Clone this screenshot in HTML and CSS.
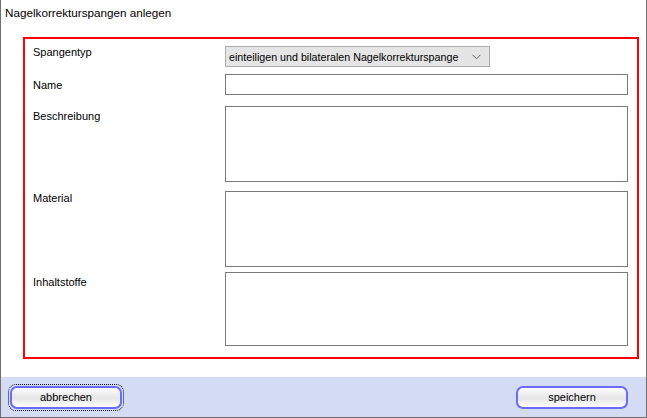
FILE: index.html
```
<!DOCTYPE html>
<html>
<head>
<meta charset="utf-8">
<link rel="stylesheet" href="styles.css">
</head>
<body>
<div class="window">
  <div class="titlebar">Nagelkorrekturspangen anlegen</div>
  <div class="content">
    <div class="formbox">
      <div class="row r1">
        <div class="label">Spangentyp</div>
        <div class="select"><span class="seltext">einteiligen und bilateralen Nagelkorrekturspange</span>
          <svg class="chev" width="9" height="6" viewBox="0 0 9 6"><path d="M0.5 0.8 L4.5 4.8 L8.5 0.8" fill="none" stroke="#606060" stroke-width="1"/></svg>
        </div>
      </div>
      <div class="row r2">
        <div class="label l2">Name</div>
        <div class="input"></div>
      </div>
      <div class="row r3">
        <div class="label l3">Beschreibung</div>
        <div class="textarea"></div>
      </div>
      <div class="row r4">
        <div class="label l4">Material</div>
        <div class="textarea"></div>
      </div>
      <div class="row r5">
        <div class="label l5">Inhaltstoffe</div>
        <div class="textarea t5"></div>
      </div>
    </div>
  </div>
  <div class="footer">
    <div class="btnwrap focus"><div class="btn">abbrechen</div></div>
    <div class="btnwrap"><div class="btn">speichern</div></div>
  </div>
</div>
</body>
</html>
```
FILE: styles.css
```
html, body {
  margin: 0;
  padding: 0;
  background: #ffffff;
}
.window {
  width: 647px;
  height: 418px;
  box-sizing: border-box;
  border-left: 1px solid #6f6f6f;
  border-right: 1px solid #6f6f6f;
  border-bottom: 1px solid #6f6f6f;
  background: #ffffff;
  display: flex;
  flex-direction: column;
  font-family: "Liberation Sans", Arial, sans-serif;
  color: #000;
  position: relative;
}
.titlebar {
  height: 27px;
  box-sizing: border-box;
  padding: 5px 0 0 4px;
  font-family: "Liberation Sans", Arial, sans-serif;
  font-size: 11.7px;
  line-height: 16px;
  color: #000;
}
.content {
  height: 350px;
  padding: 10px 0 0 22px;
  box-sizing: border-box;
}
.formbox {
  width: 616px;
  height: 322px;
  box-sizing: border-box;
  border: 2px solid #ff0000;
  padding: 7px 9px 0 8px;
}
.row {
  display: flex;
  align-items: flex-start;
}
.label {
  width: 192px;
  flex: none;
  font-size: 11px;
  line-height: 13px;
}
.r1 .label { padding-top: 0px; }
.r2 { margin-top: 7px; }
.l2 { padding-top: 5px; }
.r3 { margin-top: 11px; }
.l3 { padding-top: 4px; }
.r4 { margin-top: 9px; }
.l4 { padding-top: 1px; }
.r5 { margin-top: 5px; }
.l5 { padding-top: 4px; }
.select {
  width: 265px;
  height: 21px;
  box-sizing: border-box;
  border: 1px solid #adadad;
  background: #e5e5e5;
  display: flex;
  align-items: center;
  padding-left: 3px;
  position: relative;
}
.seltext {
  font-family: "Liberation Sans", Arial, sans-serif;
  font-size: 10.7px;
  line-height: 14px;
  white-space: nowrap;
  color: #000;
}
.chev {
  position: absolute;
  right: 8px;
  top: 7px;
}
.input {
  flex: 1;
  height: 21px;
  box-sizing: border-box;
  border: 1px solid #7a7a7a;
  background: #fff;
}
.textarea {
  flex: 1;
  height: 76px;
  box-sizing: border-box;
  border: 1px solid #7a7a7a;
  background: #fff;
}
.t5 { height: 74px; }
.footer {
  margin-top: auto;
  height: 40px;
  background: #d4dcf4;
  display: flex;
  justify-content: space-between;
  align-items: center;
  padding: 0 16px 0 7px;
}
.btnwrap {
  padding: 1px;
  border: 1px dotted transparent;
  border-radius: 8px;
}
.btnwrap.focus {
  border-color: #000;
}
.btn {
  width: 112px;
  height: 23px;
  box-sizing: border-box;
  border: 2px solid #6a6aff;
  border-radius: 7px;
  background: linear-gradient(#ffffff 0%, #ececec 35%, #e6e6e6 55%, #ffffff 100%);
  font-family: "Liberation Sans", Arial, sans-serif;
  font-size: 11px;
  line-height: 19px;
  text-align: center;
  color: #000;
}
```
